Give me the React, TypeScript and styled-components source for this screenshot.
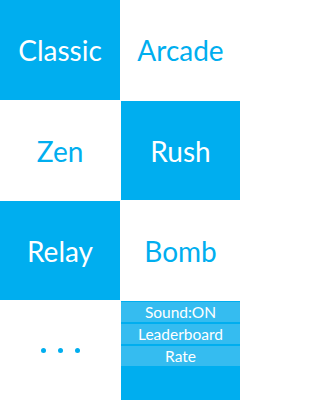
import React from "react";
import styled, { createGlobalStyle } from "styled-components";

const GlobalStyle = createGlobalStyle`
  html, body {
    margin: 0;
    padding: 0;
    background: #ffffff;
  }
  body {
    font-family: Lato, "Open Sans", sans-serif;
  }
`;

const BLUE = "#00aeef";
const LIGHT_BLUE = "#35bcf0";

const Board = styled.main`
  width: 240px;
  height: 400px;
  display: grid;
  grid-template-columns: 120px 119px;
  grid-template-rows: 100px 99px 99px 99px;
  gap: 1px;
  background: #ffffff;
  overflow: hidden;
`;

const Tile = styled.div<{ $filled?: boolean }>`
  display: flex;
  align-items: center;
  justify-content: center;
  background: ${(p) => (p.$filled ? BLUE : "#ffffff")};
  color: ${(p) => (p.$filled ? "#ffffff" : BLUE)};
  font-size: 28px;
  font-weight: 400;
  cursor: pointer;
  user-select: none;
`;

const Dots = styled.div`
  display: flex;
  gap: 12px;

  span {
    width: 5px;
    height: 5px;
    border-radius: 50%;
    background: ${BLUE};
  }
`;

const Menu = styled.div`
  background: ${BLUE};
  display: flex;
  flex-direction: column;
  gap: 2px;
  padding-top: 1px;
`;

const MenuItem = styled.div`
  height: 20px;
  background: ${LIGHT_BLUE};
  color: #ffffff;
  font-size: 15.5px;
  line-height: 20px;
  text-align: center;
  cursor: pointer;
`;

const modes = [
  { name: "Classic", filled: true },
  { name: "Arcade", filled: false },
  { name: "Zen", filled: false },
  { name: "Rush", filled: true },
  { name: "Relay", filled: true },
  { name: "Bomb", filled: false },
];

const App: React.FC = () => {
  return (
    <>
      <GlobalStyle />
      <Board>
        {modes.map((m) => (
          <Tile key={m.name} $filled={m.filled}>
            {m.name}
          </Tile>
        ))}
        <Tile>
          <Dots>
            <span />
            <span />
            <span />
          </Dots>
        </Tile>
        <Menu>
          <MenuItem>Sound:ON</MenuItem>
          <MenuItem>Leaderboard</MenuItem>
          <MenuItem>Rate</MenuItem>
        </Menu>
      </Board>
    </>
  );
};

export default App;
